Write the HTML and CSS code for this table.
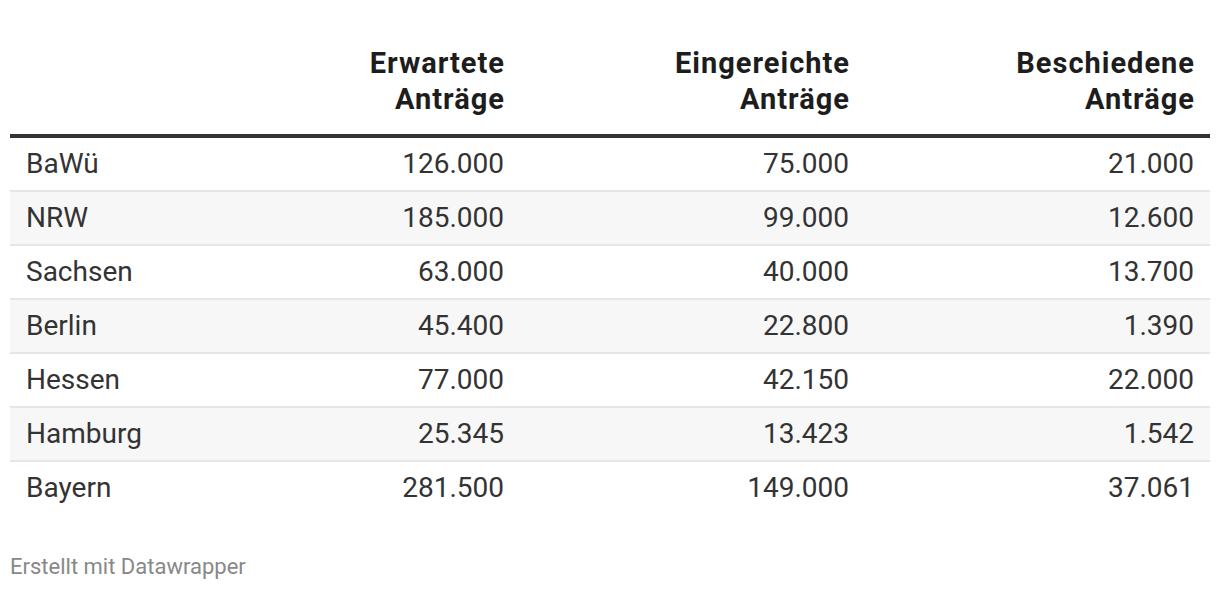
FILE: index.html
```html
<!DOCTYPE html>
<html lang="de">
<head>
<meta charset="utf-8">
<title>Anträge</title>
<link rel="stylesheet" href="styles.css">
</head>
<body>
<div class="chart">
  <div class="table">
    <div class="row head">
      <div class="cell"></div>
      <div class="cell num">Erwartete<br>Anträge</div>
      <div class="cell num">Eingereichte<br>Anträge</div>
      <div class="cell num">Beschiedene<br>Anträge</div>
    </div>
    <div class="row">
      <div class="cell">BaWü</div><div class="cell num">126.000</div><div class="cell num">75.000</div><div class="cell num">21.000</div>
    </div>
    <div class="row alt">
      <div class="cell">NRW</div><div class="cell num">185.000</div><div class="cell num">99.000</div><div class="cell num">12.600</div>
    </div>
    <div class="row">
      <div class="cell">Sachsen</div><div class="cell num">63.000</div><div class="cell num">40.000</div><div class="cell num">13.700</div>
    </div>
    <div class="row alt">
      <div class="cell">Berlin</div><div class="cell num">45.400</div><div class="cell num">22.800</div><div class="cell num">1.390</div>
    </div>
    <div class="row">
      <div class="cell">Hessen</div><div class="cell num">77.000</div><div class="cell num">42.150</div><div class="cell num">22.000</div>
    </div>
    <div class="row alt">
      <div class="cell">Hamburg</div><div class="cell num">25.345</div><div class="cell num">13.423</div><div class="cell num">1.542</div>
    </div>
    <div class="row last">
      <div class="cell">Bayern</div><div class="cell num">281.500</div><div class="cell num">149.000</div><div class="cell num">37.061</div>
    </div>
  </div>
  <div class="footer">Erstellt mit Datawrapper</div>
</div>
</body>
</html>
```

FILE: styles.css
```css
html, body {
  margin: 0;
  padding: 0;
  background: #ffffff;
}
body {
  font-family: Roboto, "Liberation Sans", sans-serif;
  color: #333333;
}
.chart {
  padding: 45px 10px 0 10px;
}
.table {
  display: flex;
  flex-direction: column;
}
.row {
  display: grid;
  grid-template-columns: 165px 345px 345px 345px;
  font-size: 28px;
  line-height: 36px;
  padding: 8px 0;
  border-bottom: 2px solid #e6e6e6;
}
.row.alt {
  background: #f7f7f7;
}
.row.last {
  border-bottom: none;
}
.row.head {
  font-size: 29px;
  font-weight: 700;
  color: #1d1d1d;
  letter-spacing: 1px;
  padding: 0 0 17px 0;
  border-bottom: 4px solid #333333;
}
.cell {
  padding: 0 16px;
  white-space: nowrap;
}
.cell.num {
  text-align: right;
}
.row.head .cell.num {
  padding-right: 15px;
}
.footer {
  margin-top: 38px;
  font-size: 22px;
  line-height: 30px;
  color: #888888;
}
```
